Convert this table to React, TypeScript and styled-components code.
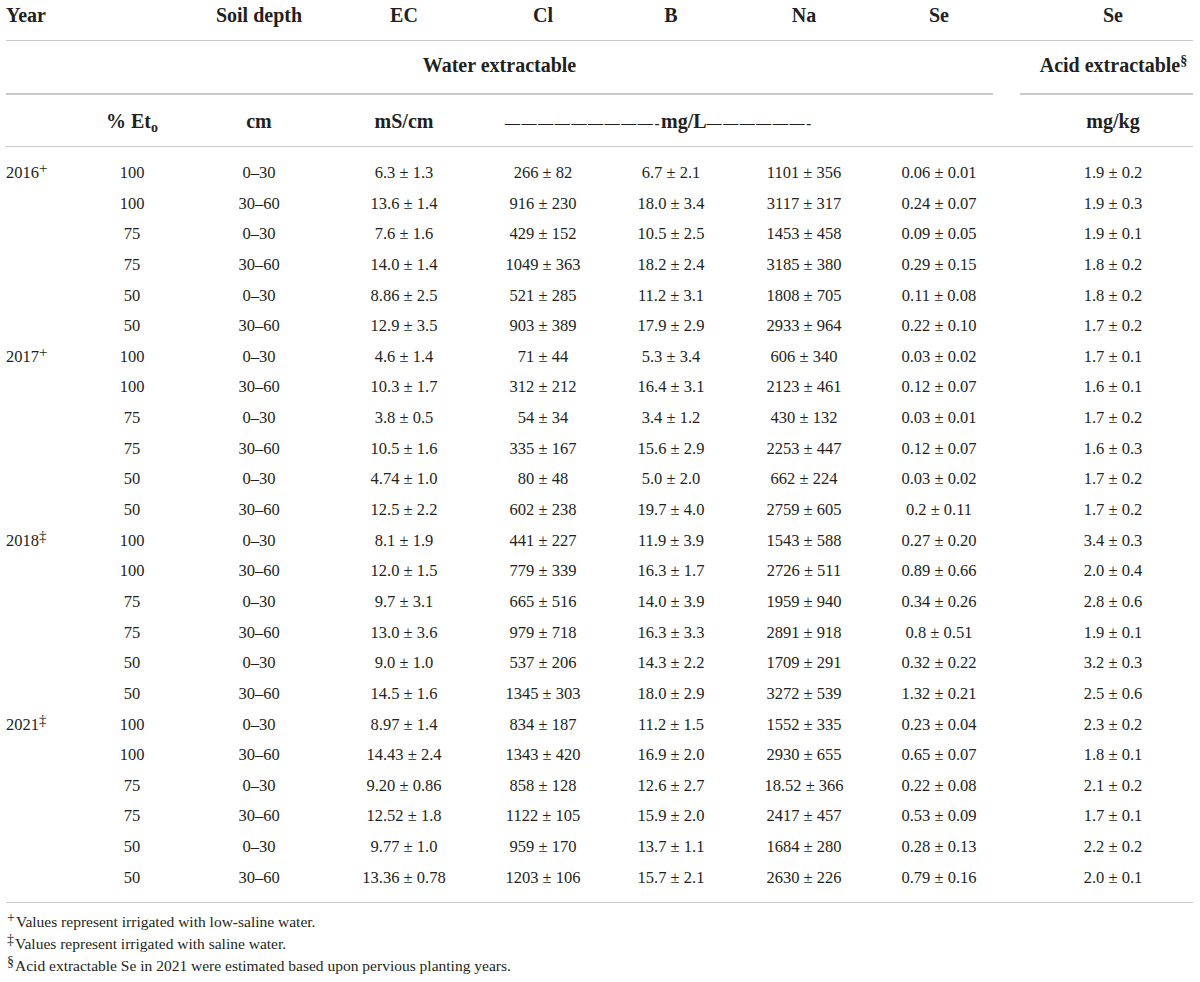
import React from "react";
import styled, { createGlobalStyle } from "styled-components";

const GlobalStyle = createGlobalStyle`
  html, body { margin: 0; padding: 0; background: #ffffff; }
  body { font-family: "Liberation Serif", "Times New Roman", serif; color: #231f20; }
`;

const COLS = "64px 124px 130px 160px 118px 138px 128px 142px 183px";
const RULE = "#c8c8c8";

const Page = styled.div`
  width: 1187px;
  padding: 0 7px 0 6px;
`;

const HeadRow = styled.div`
  display: grid;
  grid-template-columns: ${COLS};
  height: 41px;
  box-sizing: border-box;
  padding-top: 3px;
  border-bottom: 1px solid ${RULE};
  font-weight: 700;
  font-size: 20px;
  line-height: 24px;
`;

const HeadCell = styled.div<{ $align?: "left" | "center"; $pl?: number }>`
  text-align: ${(p) => p.$align ?? "center"};
  padding-left: ${(p) => p.$pl ?? 0}px;
  white-space: nowrap;
`;

const GroupRow = styled.div`
  display: grid;
  grid-template-columns: ${COLS};
  height: 54px;
  font-weight: 700;
  font-size: 20px;
  line-height: 24px;
`;

const GroupCell = styled.div<{ $col: string; $ml?: number; $mr?: number; $pl?: number }>`
  grid-column: ${(p) => p.$col};
  margin-left: ${(p) => p.$ml ?? 0}px;
  margin-right: ${(p) => p.$mr ?? 0}px;
  padding-left: ${(p) => p.$pl ?? 0}px;
  padding-top: 12px;
  box-sizing: border-box;
  border-bottom: 2px solid ${RULE};
  text-align: center;
  white-space: nowrap;
`;

const UnitRow = styled.div`
  display: grid;
  grid-template-columns: ${COLS};
  height: 52px;
  box-sizing: border-box;
  padding-top: 14px;
  border-bottom: 1px solid ${RULE};
  font-weight: 700;
  font-size: 20px;
  line-height: 24px;
`;

const UnitSpan = styled.div`
  grid-column: 5 / 8;
  padding-left: 21px;
  text-align: left;
  white-space: nowrap;
`;

const Dashes = styled.span`
  font-size: 15px;
  letter-spacing: 1.6px;
`;

const Sub = styled.sub`
  font-size: 14px;
  line-height: 0;
  vertical-align: -4px;
`;

const HeadSup = styled.sup`
  font-size: 14px;
  line-height: 0;
  vertical-align: 7px;
`;

const Sup = styled.sup`
  font-size: 15px;
  line-height: 0;
  vertical-align: 5px;
  font-weight: 400;
`;

const Body = styled.div`
  padding: 11px 0 9px;
  border-bottom: 1px solid ${RULE};
`;

const DataRow = styled.div`
  display: grid;
  grid-template-columns: ${COLS};
  height: 30.65px;
  font-size: 16.5px;
  line-height: 30.65px;
`;

const Cell = styled.div<{ $align?: "left" | "center"; $pl?: number }>`
  text-align: ${(p) => p.$align ?? "center"};
  padding-left: ${(p) => p.$pl ?? 0}px;
  white-space: nowrap;
`;

const Notes = styled.div`
  padding: 8px 0 0 1px;
  font-size: 15.5px;
  line-height: 21.7px;
`;

const Note = styled.div`
  white-space: nowrap;
`;

const Mark = styled.sup`
  font-size: 14px;
  line-height: 0;
  vertical-align: 5px;
  margin-right: 1px;
`;

type Group = { year: string; mark: string; rows: string[][] };

const groups: Group[] = [
  {
    year: "2016",
    mark: "+",
    rows: [
      ["100", "0–30", "6.3 ± 1.3", "266 ± 82", "6.7 ± 2.1", "1101 ± 356", "0.06 ± 0.01", "1.9 ± 0.2"],
      ["100", "30–60", "13.6 ± 1.4", "916 ± 230", "18.0 ± 3.4", "3117 ± 317", "0.24 ± 0.07", "1.9 ± 0.3"],
      ["75", "0–30", "7.6 ± 1.6", "429 ± 152", "10.5 ± 2.5", "1453 ± 458", "0.09 ± 0.05", "1.9 ± 0.1"],
      ["75", "30–60", "14.0 ± 1.4", "1049 ± 363", "18.2 ± 2.4", "3185 ± 380", "0.29 ± 0.15", "1.8 ± 0.2"],
      ["50", "0–30", "8.86 ± 2.5", "521 ± 285", "11.2 ± 3.1", "1808 ± 705", "0.11 ± 0.08", "1.8 ± 0.2"],
      ["50", "30–60", "12.9 ± 3.5", "903 ± 389", "17.9 ± 2.9", "2933 ± 964", "0.22 ± 0.10", "1.7 ± 0.2"],
    ],
  },
  {
    year: "2017",
    mark: "+",
    rows: [
      ["100", "0–30", "4.6 ± 1.4", "71 ± 44", "5.3 ± 3.4", "606 ± 340", "0.03 ± 0.02", "1.7 ± 0.1"],
      ["100", "30–60", "10.3 ± 1.7", "312 ± 212", "16.4 ± 3.1", "2123 ± 461", "0.12 ± 0.07", "1.6 ± 0.1"],
      ["75", "0–30", "3.8 ± 0.5", "54 ± 34", "3.4 ± 1.2", "430 ± 132", "0.03 ± 0.01", "1.7 ± 0.2"],
      ["75", "30–60", "10.5 ± 1.6", "335 ± 167", "15.6 ± 2.9", "2253 ± 447", "0.12 ± 0.07", "1.6 ± 0.3"],
      ["50", "0–30", "4.74 ± 1.0", "80 ± 48", "5.0 ± 2.0", "662 ± 224", "0.03 ± 0.02", "1.7 ± 0.2"],
      ["50", "30–60", "12.5 ± 2.2", "602 ± 238", "19.7 ± 4.0", "2759 ± 605", "0.2 ± 0.11", "1.7 ± 0.2"],
    ],
  },
  {
    year: "2018",
    mark: "‡",
    rows: [
      ["100", "0–30", "8.1 ± 1.9", "441 ± 227", "11.9 ± 3.9", "1543 ± 588", "0.27 ± 0.20", "3.4 ± 0.3"],
      ["100", "30–60", "12.0 ± 1.5", "779 ± 339", "16.3 ± 1.7", "2726 ± 511", "0.89 ± 0.66", "2.0 ± 0.4"],
      ["75", "0–30", "9.7 ± 3.1", "665 ± 516", "14.0 ± 3.9", "1959 ± 940", "0.34 ± 0.26", "2.8 ± 0.6"],
      ["75", "30–60", "13.0 ± 3.6", "979 ± 718", "16.3 ± 3.3", "2891 ± 918", "0.8 ± 0.51", "1.9 ± 0.1"],
      ["50", "0–30", "9.0 ± 1.0", "537 ± 206", "14.3 ± 2.2", "1709 ± 291", "0.32 ± 0.22", "3.2 ± 0.3"],
      ["50", "30–60", "14.5 ± 1.6", "1345 ± 303", "18.0 ± 2.9", "3272 ± 539", "1.32 ± 0.21", "2.5 ± 0.6"],
    ],
  },
  {
    year: "2021",
    mark: "‡",
    rows: [
      ["100", "0–30", "8.97 ± 1.4", "834 ± 187", "11.2 ± 1.5", "1552 ± 335", "0.23 ± 0.04", "2.3 ± 0.2"],
      ["100", "30–60", "14.43 ± 2.4", "1343 ± 420", "16.9 ± 2.0", "2930 ± 655", "0.65 ± 0.07", "1.8 ± 0.1"],
      ["75", "0–30", "9.20 ± 0.86", "858 ± 128", "12.6 ± 2.7", "18.52 ± 366", "0.22 ± 0.08", "2.1 ± 0.2"],
      ["75", "30–60", "12.52 ± 1.8", "1122 ± 105", "15.9 ± 2.0", "2417 ± 457", "0.53 ± 0.09", "1.7 ± 0.1"],
      ["50", "0–30", "9.77 ± 1.0", "959 ± 170", "13.7 ± 1.1", "1684 ± 280", "0.28 ± 0.13", "2.2 ± 0.2"],
      ["50", "30–60", "13.36 ± 0.78", "1203 ± 106", "15.7 ± 2.1", "2630 ± 226", "0.79 ± 0.16", "2.0 ± 0.1"],
    ],
  },
];

export default function App() {
  return (
    <>
      <GlobalStyle />
      <Page>
        <HeadRow>
          <HeadCell $align="left">Year</HeadCell>
          <HeadCell />
          <HeadCell>Soil depth</HeadCell>
          <HeadCell>EC</HeadCell>
          <HeadCell>Cl</HeadCell>
          <HeadCell>B</HeadCell>
          <HeadCell>Na</HeadCell>
          <HeadCell>Se</HeadCell>
          <HeadCell $pl={23}>Se</HeadCell>
        </HeadRow>
        <GroupRow>
          <GroupCell $col="1 / 9" $mr={17}>Water extractable</GroupCell>
          <GroupCell $col="9 / 10" $ml={10} $pl={14}>
            Acid extractable<HeadSup>§</HeadSup>
          </GroupCell>
        </GroupRow>
        <UnitRow>
          <HeadCell />
          <HeadCell>
            % Et<Sub>o</Sub>
          </HeadCell>
          <HeadCell>cm</HeadCell>
          <HeadCell>mS/cm</HeadCell>
          <UnitSpan>
            <Dashes>—————————-</Dashes>mg/L<Dashes>——————-</Dashes>
          </UnitSpan>
          <HeadCell />
          <HeadCell $pl={23}>mg/kg</HeadCell>
        </UnitRow>
        <Body>
          {groups.map((g) =>
            g.rows.map((r, i) => (
              <DataRow key={g.year + i}>
                <Cell $align="left">
                  {i === 0 ? (
                    <>
                      {g.year}
                      <Sup>{g.mark}</Sup>
                    </>
                  ) : null}
                </Cell>
                {r.map((v, j) => (
                  <Cell key={j} $pl={j === 7 ? 23 : 0}>
                    {v}
                  </Cell>
                ))}
              </DataRow>
            ))
          )}
        </Body>
        <Notes>
          <Note>
            <Mark>+</Mark>Values represent irrigated with low-saline water.
          </Note>
          <Note>
            <Mark>‡</Mark>Values represent irrigated with saline water.
          </Note>
          <Note>
            <Mark>§</Mark>Acid extractable Se in 2021 were estimated based upon pervious planting years.
          </Note>
        </Notes>
      </Page>
    </>
  );
}
